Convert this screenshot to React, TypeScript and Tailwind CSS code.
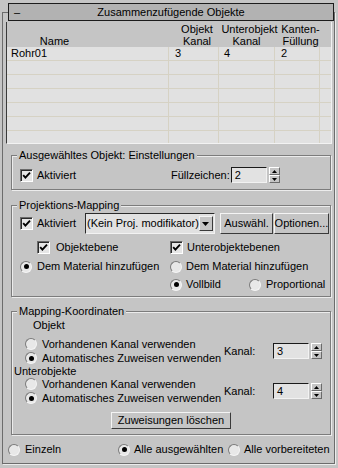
import React from 'react'

function Check() {
  return (
    <span className="flex items-center justify-center w-[13px] h-[13px] shrink-0 bg-[#e6e6e6] border border-t-[#6a6a6a] border-l-[#6a6a6a] border-r-white border-b-white shadow-[inset_1px_1px_0_#2a2a2a]">
      <svg viewBox="0 0 11 11" className="w-[11px] h-[11px]">
        <path d="M2.2 5.2 L4.4 7.6 L9 2.6" fill="none" stroke="#000" strokeWidth="1.9" />
      </svg>
    </span>
  )
}

function Radio({ on = false }: { on?: boolean }) {
  return (
    <span className="flex items-center justify-center w-[12px] h-[12px] shrink-0 rounded-full bg-[#e8e8e8] border border-t-[#7a7a7a] border-l-[#7a7a7a] border-r-[#f4f4f4] border-b-[#f4f4f4]">
      {on && <span className="w-[5px] h-[5px] rounded-full bg-black" />}
    </span>
  )
}

function Tri({ down = false }: { down?: boolean }) {
  return (
    <svg viewBox="0 0 7 4" className="w-[7px] h-[4px]">
      <polygon points={down ? '0,0 7,0 3.5,4' : '0,4 7,4 3.5,0'} fill="#000" />
    </svg>
  )
}

function Spinner() {
  return (
    <div className="flex flex-col w-[11px] h-[16px] ml-[2px]">
      <div className="flex-1 flex items-center justify-center border border-t-white border-l-white border-r-[#6a6a6a] border-b-[#6a6a6a]">
        <svg viewBox="0 0 5 3" className="w-[5px] h-[3px]"><polygon points="0,3 5,3 2.5,0" fill="#000" /></svg>
      </div>
      <div className="flex-1 flex items-center justify-center border border-t-white border-l-white border-r-[#6a6a6a] border-b-[#6a6a6a]">
        <svg viewBox="0 0 5 3" className="w-[5px] h-[3px]"><polygon points="0,0 5,0 2.5,3" fill="#000" /></svg>
      </div>
    </div>
  )
}

function Field({ value }: { value: string }) {
  return (
    <div className="w-[36px] h-[16px] ml-[1px] bg-[#e2e2e2] border border-t-[#1a1a1a] border-l-[#1a1a1a] border-r-[#f2f2f2] border-b-[#f2f2f2] pl-[3px] leading-[14px]">
      {value}
    </div>
  )
}

function Btn({ children, className = '' }: { children: React.ReactNode; className?: string }) {
  return (
    <div className={'flex items-center justify-center border border-t-[#f4f4f4] border-l-[#f4f4f4] border-r-[#3a3a3a] border-b-[#3a3a3a] bg-[#c5c5c5] whitespace-nowrap ' + className}>
      {children}
    </div>
  )
}

function Group({ title, children, className = '' }: { title: string; children: React.ReactNode; className?: string }) {
  return (
    <fieldset className={'ml-[8px] w-[320px] border border-[#7c7c7c] shadow-[1px_1px_0_#ececec,inset_1px_1px_0_#ececec] ' + className}>
      <legend className="ml-[5px] px-[2px] bg-[#c5c5c5] leading-[13px]">{title}</legend>
      {children}
    </fieldset>
  )
}

function ChannelBlock({ value }: { value: string }) {
  return (
    <div className="flex items-center">
      <div className="w-[212px] flex flex-col">
        <div className="flex items-center h-[14px] pl-[13px] gap-[5px]">
          <Radio />
          <span>Vorhandenen Kanal verwenden</span>
        </div>
        <div className="flex items-center h-[14px] pl-[13px] gap-[5px] whitespace-nowrap">
          <Radio on />
          <span>Automatisches Zuweisen verwenden</span>
        </div>
      </div>
      <span className="w-[48px]">Kanal:</span>
      <Field value={value} />
      <Spinner />
    </div>
  )
}

export default function App() {
  const rows = [
    ['Rohr01', '3', '4', '2'],
    ['', '', '', ''],
    ['', '', '', ''],
    ['', '', '', ''],
    ['', '', '', ''],
    ['', '', '', ''],
    ['', '', '', ''],
  ]

  return (
    <div className="w-[338px] h-[468px] bg-[#c5c5c5] pt-[12px] text-[11px] leading-[13px] text-black font-['Liberation_Sans',Arial,sans-serif] overflow-hidden">
      <div className="ml-[2px] w-[333px] h-[452px] border border-[#6c6c6c] shadow-[1px_1px_0_#ececec]">
        {/* rollout title */}
        <div className="-mt-[10px] ml-[5px] w-[326px] h-[18px] bg-[#b2b2b2] border border-[#1c1c1c] grid grid-cols-[24px_1fr_24px] items-center">
          <span className="pl-[5px]">–</span>
          <span className="text-center whitespace-nowrap">Zusammenzufügende Objekte</span>
          <span />
        </div>

        {/* object list */}
        <div className="mt-[1px] ml-[3px] w-[326px] h-[122px] border-l border-l-[#3a3a3a] border-r border-r-[#f2f2f2] border-b border-b-[#f2f2f2] overflow-hidden">
          <div className="h-[25px] flex pt-[1px] leading-[12px] whitespace-nowrap">
            <div className="w-[95px] flex items-end justify-center">Name</div>
            <div className="w-[70px]" />
            <div className="w-[50px] flex flex-col items-center"><span>Objekt</span><span>Kanal</span></div>
            <div className="w-[55px] flex flex-col items-center"><span>Unterobjekt</span><span className="-ml-[6px]">Kanal</span></div>
            <div className="w-[43px] ml-[2px] flex flex-col items-center"><span>Kanten-</span><span>Füllung</span></div>
          </div>
          <div className="bg-[#e1e1e1]">
            {rows.map((r, i) => (
              <div key={i} className="flex h-[14px] border-b border-b-[#d6d2c4]">
                <div className="w-[162px] pl-[4px] border-r border-r-[#d6d2c4]">{r[0]}</div>
                <div className="w-[50px] pl-[6px] border-r border-r-[#d6d2c4]">{r[1]}</div>
                <div className="w-[56px] pl-[5px] border-r border-r-[#d6d2c4]">{r[2]}</div>
                <div className="w-[45px] pl-[6px] border-r border-r-[#d6d2c4]">{r[3]}</div>
                <div className="flex-1" />
              </div>
            ))}
          </div>
        </div>

        {/* selected object settings */}
        <Group title="Ausgewähltes Objekt: Einstellungen" className="mt-[5px]">
          <div className="flex items-center h-[16px] mt-[5px] mb-[6px] pl-[8px]">
            <div className="flex items-center gap-[4px] w-[151px]">
              <Check />
              <span>Aktiviert</span>
            </div>
            <span>Füllzeichen:</span>
            <Field value="2" />
            <Spinner />
          </div>
        </Group>

        {/* projection mapping */}
        <Group title="Projektions-Mapping" className="mt-[9px]">
          <div className="pl-[8px] pt-[1px] pb-[5px]">
            <div className="flex items-center h-[21px]">
              <div className="flex items-center gap-[4px] w-[65px]">
                <Check />
                <span>Aktiviert</span>
              </div>
              <div className="w-[130px] h-[21px] flex items-center bg-[#e1e1e1] border border-t-[#2a2a2a] border-l-[#2a2a2a] border-r-[#f2f2f2] border-b-[#f2f2f2]">
                <span className="flex-1 pl-[1px] whitespace-nowrap">(Kein Proj. modifikator)</span>
                <Btn className="w-[15px] h-[15px] mr-[1px]"><Tri down /></Btn>
              </div>
              <Btn className="w-[53px] h-[21px] ml-[5px]">Auswähl.</Btn>
              <Btn className="w-[55px] h-[21px] ml-[1px]">Optionen...</Btn>
            </div>
            <div className="flex items-center h-[13px] mt-[7px]">
              <div className="flex items-center gap-[6px] w-[150px] pl-[17px]">
                <Check />
                <span>Objektebene</span>
              </div>
              <div className="flex items-center gap-[4px]">
                <Check />
                <span>Unterobjektebenen</span>
              </div>
            </div>
            <div className="flex items-center h-[13px] mt-[6px]">
              <div className="flex items-center gap-[5px] w-[150px] whitespace-nowrap">
                <Radio on />
                <span>Dem Material hinzufügen</span>
              </div>
              <div className="flex items-center gap-[4px] whitespace-nowrap">
                <Radio />
                <span>Dem Material hinzufügen</span>
              </div>
            </div>
            <div className="flex items-center h-[13px] mt-[5px]">
              <div className="w-[150px]" />
              <div className="flex items-center gap-[4px] w-[79px]">
                <Radio on />
                <span>Vollbild</span>
              </div>
              <div className="flex items-center gap-[5px]">
                <Radio />
                <span>Proportional</span>
              </div>
            </div>
          </div>
        </Group>

        {/* mapping coordinates */}
        <Group title="Mapping-Koordinaten" className="mt-[8px]">
          <div className="pt-[1px] pb-[5px]">
            <div className="h-[13px] pl-[21px]">Objekt</div>
            <div className="mt-[5px]">
              <ChannelBlock value="3" />
            </div>
            <div className="h-[12px] leading-[12px] pl-[2px]">Unterobjekte</div>
            <ChannelBlock value="4" />
            <Btn className="w-[120px] h-[17px] mt-[7px] mx-auto">Zuweisungen löschen</Btn>
          </div>
        </Group>

        {/* apply scope */}
        <div className="flex items-center h-[13px] mt-[8px] pl-[5px] whitespace-nowrap">
          <div className="flex items-center gap-[5px] w-[110px]">
            <Radio />
            <span>Einzeln</span>
          </div>
          <div className="flex items-center gap-[4px] w-[110px]">
            <Radio on />
            <span>Alle ausgewählten</span>
          </div>
          <div className="flex items-center gap-[4px]">
            <Radio />
            <span>Alle vorbereiteten</span>
          </div>
        </div>
      </div>
    </div>
  )
}
